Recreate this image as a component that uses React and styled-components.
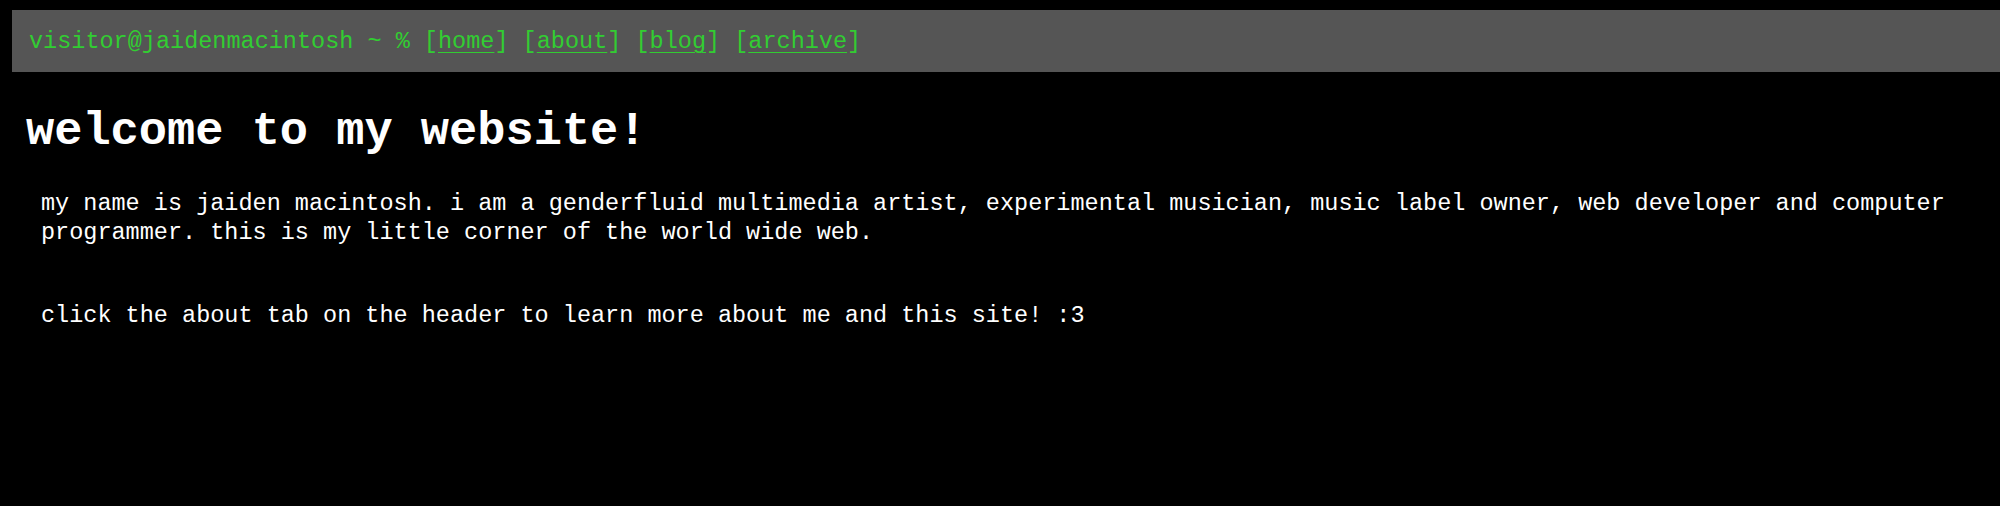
import styled, { createGlobalStyle } from "styled-components";

const GlobalStyle = createGlobalStyle`
	html, body {
		margin: 0;
		padding: 0;
		background: #000;
	}
	body {
		font-family: "Liberation Mono", "Courier New", monospace;
		font-size: 23.5px;
		color: #fff;
	}
`;

// Header

const Header = styled.header`
	margin: 10px 0 0 12px;
	height: 62px;
	background-color: #555555;
	display: flex;
	align-items: center;
	padding: 2px 0 0 17px;
	box-sizing: border-box;
	color: #32cd32;
	white-space: pre;
	line-height: 1.2;
`;

const NavLink = styled.a`
	color: #32cd32;
	text-decoration: underline;
	text-underline-offset: 4px;
	text-decoration-thickness: 1px;
`;

// Content

const Main = styled.main`
	padding: 32px 0 0 26px;
`;

const Title = styled.h1`
	margin: 0 0 30px 0;
	font-size: 47px;
	font-weight: 700;
	line-height: 1.2;
`;

const Text = styled.p`
	margin: 0 0 ${(props) => props.gap || 0}px 15px;
	line-height: 1.2;
	max-width: 1950px;
`;

const links = ["home", "about", "blog", "archive"];

const App = () => {
	return (
		<>
			<GlobalStyle />
			<Header>
				visitor@jaidenmacintosh ~ %
				{links.map((l) => (
					<span key={l}>
						{" ["}
						<NavLink href="#">{l}</NavLink>]
					</span>
				))}
			</Header>
			<Main>
				<Title>welcome to my website!</Title>
				<Text gap={55}>
					my name is jaiden macintosh. i am a genderfluid multimedia artist,
					experimental musician, music label owner, web developer and computer
					programmer. this is my little corner of the world wide web.
				</Text>
				<Text>
					click the about tab on the header to learn more about me and this
					site! :3
				</Text>
			</Main>
		</>
	);
};

export default App;
